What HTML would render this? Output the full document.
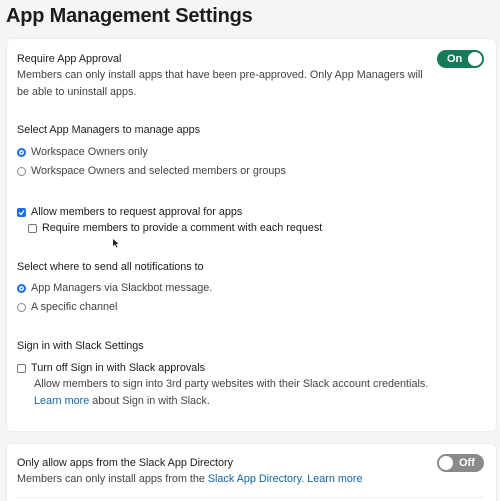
<!DOCTYPE html><html><head><style>
html,body{margin:0;width:500px;height:501px;overflow:hidden}
body{background:#f6f5f6;font-family:"Liberation Sans",sans-serif;color:#1d1c1d;position:relative}
.a{position:absolute;white-space:nowrap;font-size:10.8px;line-height:14px}
.g{color:#454245}
.l{color:#1264a3}
.card{position:absolute;background:#fff;border-radius:6px;border:1px solid #eeeded}
.r{position:absolute;width:9px;height:9px;border-radius:50%;border:1px solid #888;background:#fff;box-sizing:border-box}
.r.on{border:2px solid #1d6fe0;background:#1d6fe0;box-shadow:inset 0 0 0 1.5px #fff}
.c{position:absolute;width:9px;height:9px;border:1px solid #777;border-radius:2px;box-sizing:border-box;background:#fff}
.c.on{background:#1d6fe0;border-color:#1d6fe0}
</style></head><body>
<div class="a" style="left:6px;top:2px;font-size:20px;line-height:28px;font-weight:bold;letter-spacing:-0.2px">App Management Settings</div>
<div class="card" style="left:6px;top:38px;width:489px;height:392px"></div>
<div class="card" style="left:6px;top:443px;width:489px;height:70px"></div>
<div style="position:absolute;left:437px;top:50px;width:47px;height:18px;border-radius:9px;background:#157a5a"></div>
<div class="a" style="left:447px;top:52px;color:#fff;font-size:11px;font-weight:bold">On</div>
<div style="position:absolute;left:468px;top:52px;width:14px;height:14px;border-radius:50%;background:#fff"></div>
<div style="position:absolute;left:437px;top:454px;width:47px;height:18px;border-radius:9px;background:#8a8a8a"></div>
<div class="a" style="left:459px;top:456px;color:#fff;font-size:11px;font-weight:bold">Off</div>
<div style="position:absolute;left:439px;top:456px;width:14px;height:14px;border-radius:50%;background:#fff"></div>

<div class="a" style="left:17px;top:52px">Require App Approval</div>
<div class="a g" style="left:17px;top:68px">Members can only install apps that have been pre-approved. Only App Managers will</div>
<div class="a g" style="left:17px;top:85px">be able to uninstall apps.</div>
<div class="a" style="left:17px;top:123px">Select App Managers to manage apps</div>
<div class="r on" style="left:17px;top:148px"></div>
<div class="a g" style="left:31px;top:145px">Workspace Owners only</div>
<div class="r" style="left:17px;top:167px"></div>
<div class="a g" style="left:31px;top:164px">Workspace Owners and selected members or groups</div>
<div class="c on" style="left:17px;top:208px"><svg width="7" height="7" viewBox="0 0 7 7" style="position:absolute;left:0;top:0"><path d="M1 3.5L3 5.5L6 1.5" stroke="#fff" stroke-width="1.3" fill="none"/></svg></div>
<div class="a" style="left:31px;top:205px">Allow members to request approval for apps</div>
<div class="c" style="left:28px;top:224px"></div>
<div class="a" style="left:42px;top:221px">Require members to provide a comment with each request</div>
<svg style="position:absolute;left:113px;top:239px" width="6" height="9" viewBox="0 0 6 9"><path d="M0 0V7L2 5.5L3.5 8.5L4.5 8L3 5H5.5Z" fill="#222"/></svg>
<div class="a" style="left:17px;top:260px">Select where to send all notifications to</div>
<div class="r on" style="left:17px;top:284px"></div>
<div class="a g" style="left:31px;top:281px">App Managers via Slackbot message.</div>
<div class="r" style="left:17px;top:303px"></div>
<div class="a g" style="left:31px;top:300px">A specific channel</div>
<div class="a" style="left:17px;top:339px">Sign in with Slack Settings</div>
<div class="c" style="left:17px;top:364px"></div>
<div class="a" style="left:31px;top:361px">Turn off Sign in with Slack approvals</div>
<div class="a g" style="left:34px;top:377px">Allow members to sign into 3rd party websites with their Slack account credentials.</div>
<div class="a g" style="left:34px;top:394px"><span class="l">Learn more</span> about Sign in with Slack.</div>
<div class="a" style="left:17px;top:456px">Only allow apps from the Slack App Directory</div>
<div class="a g" style="left:17px;top:472px">Members can only install apps from the <span class="l">Slack App Directory. Learn more</span></div>
<div style="position:absolute;left:17px;top:497px;width:467px;height:1px;background:#eee"></div>
</body></html>
